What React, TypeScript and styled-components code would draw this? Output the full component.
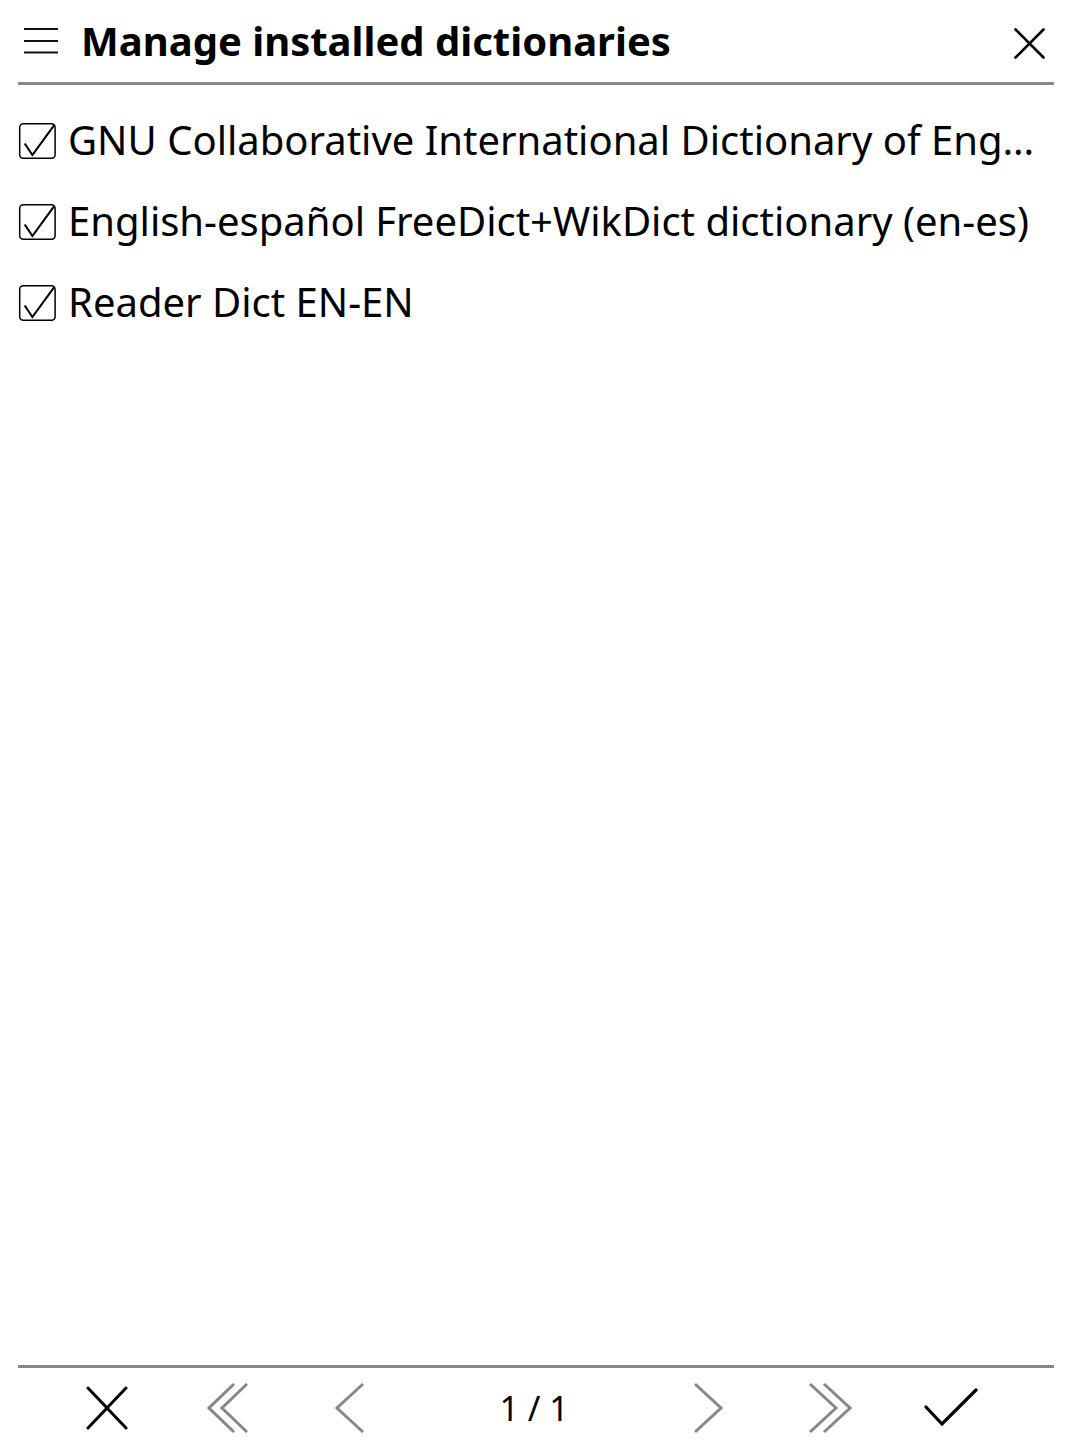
import React from "react";
import styled, { createGlobalStyle } from "styled-components";

const Global = createGlobalStyle`
  html, body { margin: 0; padding: 0; background: #ffffff; }
  body { font-family: "Noto Sans", "DejaVu Sans", sans-serif; color: #000; }
`;

const Page = styled.div`
  display: flex;
  flex-direction: column;
  height: 1448px;
  overflow: hidden;
`;

const TitleBar = styled.header`
  display: flex;
  align-items: center;
  height: 82px;
  padding: 0 27px 0 24px;
`;

const MenuButton = styled.span`
  display: flex;
  width: 34px;
  height: 26px;
  margin-right: 23px;
`;

const Title = styled.h1`
  flex: 1;
  margin: 0;
  font-size: 40px;
  font-weight: 700;
  line-height: 1;
  white-space: nowrap;
`;

const CloseButton = styled.span`
  display: flex;
  width: 31px;
  height: 31px;
  margin-top: 4px;
`;

const Rule = styled.hr`
  margin: 0 18px;
  border: none;
  height: 3px;
  background: #888888;
`;

const List = styled.ul`
  flex: 1;
  list-style: none;
  margin: 0;
  padding: 14px 18px 0;
`;

const Item = styled.li`
  display: flex;
  align-items: center;
  height: 81px;
  gap: 12px;
  font-size: 40px;
  white-space: nowrap;
`;

const ItemText = styled.span`
  overflow: hidden;
  text-overflow: ellipsis;
`;

const Footer = styled.footer`
  display: flex;
  flex-direction: column;
`;

const Pager = styled.nav`
  display: grid;
  grid-template-columns: 120px 122px 122px 250px 94px 150px 92px;
  align-items: center;
  height: 80px;
  padding-left: 47px;
`;

const IconSlot = styled.span`
  display: flex;
  justify-content: center;
`;

const PageNum = styled.span`
  text-align: center;
  font-size: 34px;
  margin-left: -4px;
`;

const Checkbox = () => (
  <svg width="38" height="40" viewBox="0 0 38 40">
    <rect x="1.7" y="3.7" width="35.4" height="34.6" rx="3.5" fill="none" stroke="#000" strokeWidth="1.5" />
    <path d="M6.7 23.5 L14.4 35 L36.4 4.8" fill="none" stroke="#000" strokeWidth="2.1" strokeLinejoin="miter" />
  </svg>
);

export default function App() {
  const items = [
    "GNU Collaborative International Dictionary of Eng…",
    "English-español FreeDict+WikDict dictionary (en-es)",
    "Reader Dict EN-EN",
  ];
  return (
    <Page>
      <Global />
      <TitleBar>
        <MenuButton>
          <svg width="34" height="26" viewBox="0 0 34 26">
            <path d="M0 1 H34 M0 13 H34 M0 24.5 H34" stroke="#111" strokeWidth="1.8" />
          </svg>
        </MenuButton>
        <Title>Manage installed dictionaries</Title>
        <CloseButton>
          <svg width="31" height="31" viewBox="0 0 31 31">
            <path d="M1.5 1.5 L29.5 29.5 M29.5 1.5 L1.5 29.5" stroke="#000" strokeWidth="2.6" strokeLinecap="round" />
          </svg>
        </CloseButton>
      </TitleBar>
      <Rule />
      <List>
        {items.map((t) => (
          <Item key={t}>
            <Checkbox />
            <ItemText>{t}</ItemText>
          </Item>
        ))}
      </List>
      <Footer>
        <Rule />
        <Pager>
          <IconSlot>
            <svg width="42" height="44" viewBox="0 0 42 44">
              <path d="M2 2 L40 42 M40 2 L2 42" stroke="#000" strokeWidth="3" strokeLinecap="round" />
            </svg>
          </IconSlot>
          <IconSlot>
            <svg width="42" height="50" viewBox="0 0 42 50">
              <path d="M27 1 L2 25 L27 49 M40 1 L15 25 L40 49" fill="none" stroke="#888" strokeWidth="3" />
            </svg>
          </IconSlot>
          <IconSlot>
            <svg width="30" height="50" viewBox="0 0 30 50">
              <path d="M28 1 L2 25 L28 49" fill="none" stroke="#888" strokeWidth="3" />
            </svg>
          </IconSlot>
          <PageNum>1 / 1</PageNum>
          <IconSlot>
            <svg width="30" height="50" viewBox="0 0 30 50">
              <path d="M2 1 L28 25 L2 49" fill="none" stroke="#888" strokeWidth="3" />
            </svg>
          </IconSlot>
          <IconSlot>
            <svg width="44" height="50" viewBox="0 0 44 50">
              <path d="M2 1 L28 25 L2 49 M16 1 L42 25 L16 49" fill="none" stroke="#888" strokeWidth="3" />
            </svg>
          </IconSlot>
          <IconSlot>
            <svg width="54" height="40" viewBox="0 0 54 40">
              <path d="M2 19 L18 36 L52 2" fill="none" stroke="#000" strokeWidth="3.2" strokeLinecap="round" />
            </svg>
          </IconSlot>
        </Pager>
      </Footer>
    </Page>
  );
}
